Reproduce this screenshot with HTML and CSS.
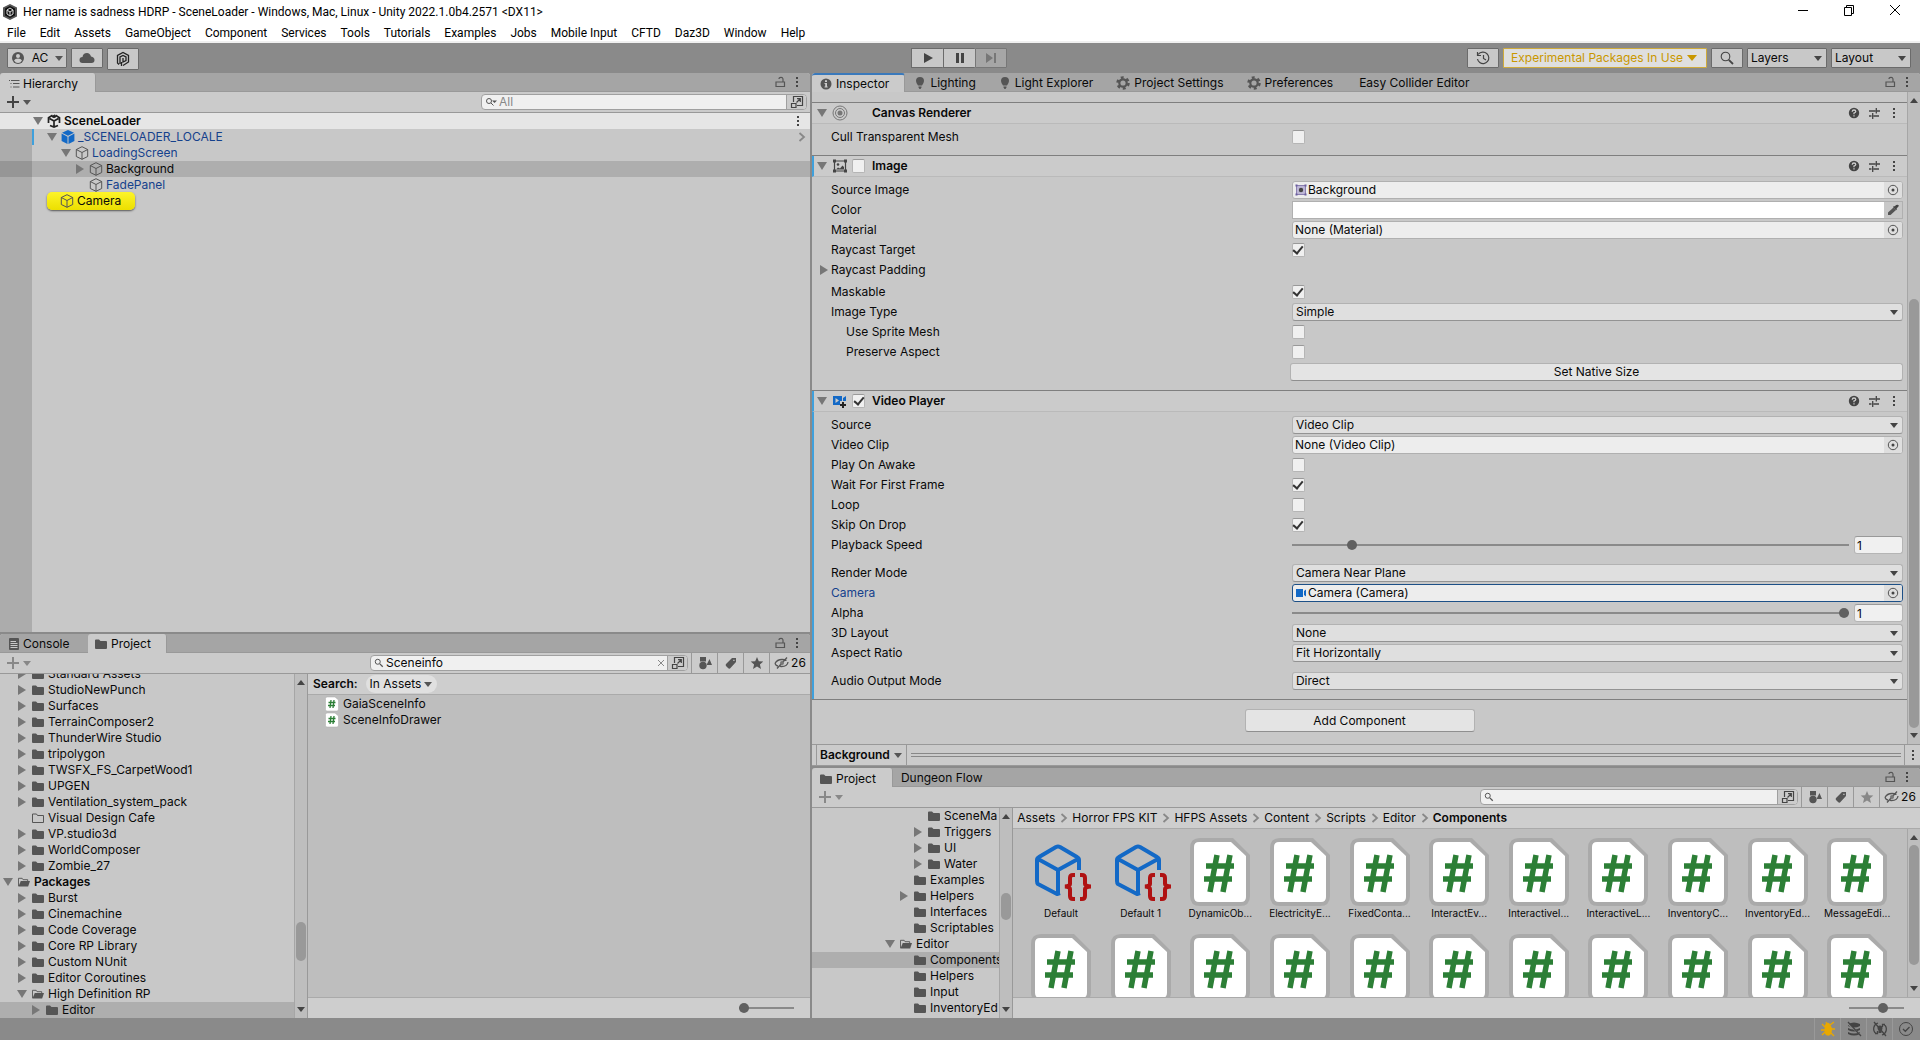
FILE: index.html
```html
<!DOCTYPE html>
<html lang="en">
<head>
<meta charset="utf-8">
<title>Her name is sadness HDRP - SceneLoader</title>
<link rel="stylesheet" href="styles.css">
</head>
<body>
<svg class="sprite" aria-hidden="true">
  <symbol id="folder" viewBox="0 0 12 12"><path fill="#555" d="M0 2.5Q0 1.5 1 1.5H4L5.500 3H11Q12 3 12 4V10Q12 11 11 11H1Q0 11 0 10Z"/></symbol>
  <symbol id="folder-empty" viewBox="0 0 12 12"><path fill="none" stroke="#555" d="M.5 2H4.500L5.500 3.500H11.500V10.500H.5Z"/></symbol>
  <symbol id="folder-open" viewBox="0 0 13 12"><path fill="none" stroke="#555" d="M.5 10.500V2H4.500L5.500 3.500H10.500V5"/><path fill="#555" d="M3 5H13L11 11H.5Z"/></symbol>
  <symbol id="cube" viewBox="0 0 14 14"><path fill="none" stroke="#555" d="M7 .7L12.700 3.500V10.500L7 13.300L1.300 10.500V3.500ZM1.300 3.500L7 6.500L12.700 3.500M7 6.500V13.300" stroke-linejoin="round"/></symbol>
  <symbol id="cube-blue" viewBox="0 0 14 14"><path fill="#1369c6" d="M7 0L13 2.700L7 5.800L1 2.700ZM.6 3.600L6.500 6.700V14L.6 11ZM13.400 3.600L7.500 6.700V14L13.400 11Z"/></symbol>
  <symbol id="unity" viewBox="0 0 14 14"><path fill="none" stroke="#222" stroke-width="1.700" d="M5.500 1.300L1.500 3.700V9M8.500 1.300L12.500 3.700V9M3 11.500L7 13L11 11.500M7 7V12.500M7 7L2.500 4.500M7 7L11.500 4.500M5 3L7 1.700V4M9 3L7 1.700"/></symbol>
  <symbol id="appicon" viewBox="0 0 16 16"><path fill="#555" d="M8 0L15 3.500V12.500L8 16L1 12.500V3.500Z"/><path fill="#111" d="M8 2L13 4.500V11.500L8 14L3 11.500V4.500Z"/><path fill="none" stroke="#ddd" d="M8 4L11 6V10L8 12L5 10V6ZM5 6L8 8L11 6M8 8V12"/></symbol>
  <symbol id="lock" viewBox="0 0 12 12"><path fill="none" stroke="#555" stroke-width="1.200" d="M2 6H10.500V10.500H2ZM9 6V3.500Q9 1.300 7 1.300T5 3"/></symbol>
  <symbol id="dots" viewBox="0 0 4 12"><path fill="#444" d="M1 1H3V3H1ZM1 5H3V7H1ZM1 9H3V11H1Z"/></symbol>
  <symbol id="list" viewBox="0 0 12 12"><path fill="none" stroke="#555" d="M3 2.500H11.500M5 5.500H11.500M5 9H11.500M1 2.500H2M2.500 5.500H3.500M2.500 9H3.500"/></symbol>
  <symbol id="console" viewBox="0 0 12 12"><rect x="1" width="10" height="12" rx="1" fill="#555"/><path stroke="#c8c8c8" d="M2.500 3.500H8M2.500 5.500H9.500M2.500 7.500H9.500M2.500 9.500H9.500"/></symbol>
  <symbol id="mag" viewBox="0 0 12 12"><circle cx="4.500" cy="4.500" r="3" fill="none" stroke="#555" stroke-width="1.200"/><path stroke="#555" stroke-width="1.500" d="M7 7L10.500 10.500"/></symbol>
  <symbol id="magmenu" viewBox="0 0 12 12"><circle cx="4" cy="5" r="2.500" fill="none" stroke="#555"/><path stroke="#555" d="M6 7L8.500 9.500"/><path fill="#555" d="M7 4.500H12L9.500 7Z"/></symbol>
  <symbol id="popout" viewBox="0 0 14 14"><path fill="none" stroke="#444" stroke-width="1.200" d="M3.500 7V1.500H12.500V10.500H7M1.500 8.500H6V12.500H1.500ZM6.500 7.500L10 4M7 3.700H10.300V7"/></symbol>
  <symbol id="shapes" viewBox="0 0 14 14"><path fill="#555" d="M2 1H8V5.500H2ZM9 8L11.500 3L14 9H9Z"/><circle cx="5" cy="9.500" r="3.700" fill="#555"/></symbol>
  <symbol id="tag" viewBox="0 0 14 14"><path fill="#555" fill-rule="evenodd" d="M2 8L8 2H12V6L6 12.500Q5 13 4 12L2 10Q1.300 9 2 8ZM9.300 3.800V5H10.500V3.800Z"/></symbol>
  <symbol id="star" viewBox="0 0 14 14"><path fill="currentColor" d="M7 1L8.800 5.200L13.300 5.500L9.900 8.400L11 13L7 10.500L3 13L4.100 8.400L.7 5.500L5.200 5.200Z"/></symbol>
  <symbol id="eyeoff" viewBox="0 0 16 14"><path fill="none" stroke="#555" stroke-width="1.300" d="M1 7.500Q3 3.500 8 3.500Q11 3.500 12.500 4.500M14 6Q13.500 10.500 7.500 10.500L6 10.300M3 12.500L13 1.500M1 7.500Q2 10 4 10"/><circle cx="8" cy="7" r="2" fill="#777"/></symbol>
  <symbol id="info" viewBox="0 0 12 12"><circle cx="6" cy="6" r="5.500" fill="#555"/><path fill="#ccc" d="M5 2.200H7V4H5ZM4.500 5H7V8.500H7.700V9.500H4.500V8.500H5.200V6H4.500Z"/></symbol>
  <symbol id="bulb" viewBox="0 0 12 12"><path fill="#555" d="M6 0Q10 .2 10 4Q9.800 6.500 8 8.500H4Q2.200 6.500 2 4Q2 .2 6 0ZM4.500 9.500H7.500V10.500L6.500 12H5.500L4.500 10.500Z"/></symbol>
  <symbol id="gear" viewBox="0 0 14 14"><circle cx="7" cy="7" r="3.700" fill="none" stroke="#555" stroke-width="2.200"/><circle cx="7" cy="7" r="5.500" fill="none" stroke="#555" stroke-width="2.500" stroke-dasharray="2.880 2.880"/></symbol>
  <symbol id="help" viewBox="0 0 12 12"><circle cx="6" cy="6" r="5.200" fill="#444"/><path fill="none" stroke="#ccc" stroke-width="1.300" d="M4.200 4.700Q4.300 3 6 3T7.800 4.500Q7.700 5.500 6 6V7.200M6 8.200V9.500"/></symbol>
  <symbol id="preset" viewBox="0 0 12 12"><path fill="none" stroke="#444" stroke-width="1.300" d="M1 4H7.500M9 4H12M8.300 1V6.500M1 9H3.500M5.500 9H11M4.700 6V12"/></symbol>
  <symbol id="canvasr" viewBox="0 0 16 16"><g fill="none" stroke="#777"><circle cx="8" cy="8" r="7"/><circle cx="8" cy="8" r="4.500"/></g><circle cx="8" cy="8" r="2.500" fill="#777"/></symbol>
  <symbol id="image" viewBox="0 0 16 16"><path fill="none" stroke="#444" stroke-width="1.200" d="M2.500 3H13.500V13H2.500Z"/><path fill="#444" d="M1 1.500H4V4.500H1ZM12 1.500H15V4.500H12ZM1 11.500H4V14.500H1ZM12 11.500H15V14.500H12ZM4 11.500L6 9.500L8 10.500L10.500 7.500L12 9V11.500Z"/><circle cx="6" cy="6.500" r="1.300" fill="#444"/></symbol>
  <symbol id="video" viewBox="0 0 16 16"><path fill="#1369c6" fill-rule="evenodd" d="M1 3H10V8H8V12H1ZM3.500 5V10L7 7.500ZM11 5L14 3V8H11Z"/><path fill="#222" d="M10 9H12V11H14V13H12V15H10V13H8V11H10Z"/></symbol>
  <symbol id="cam" viewBox="0 0 12 12"><path fill="#1369c6" d="M1 2H8V10H1ZM9 4L11 2.500V9.500L9 8Z"/></symbol>
  <symbol id="sprite-ic" viewBox="0 0 12 12"><path fill="#bdb6d6" stroke="#8a7fb0" d="M1.500 1.500H10.500V10.500H1.500Z"/><path fill="#6a5d9e" d="M.5 .5H2.500V2.500H.5ZM9.500 .5H11.500V2.500H9.500ZM.5 9.500H2.500V11.500H.5ZM9.500 9.500H11.500V11.500H9.500Z"/><circle cx="6" cy="6" r="2.200" fill="#444"/></symbol>
  <symbol id="target" viewBox="0 0 12 12"><circle cx="6" cy="6" r="4.700" fill="none" stroke="#555"/><circle cx="6" cy="6" r="1.500" fill="#444"/></symbol>
  <symbol id="dropper" viewBox="0 0 12 12"><path fill="#444" d="M8 2Q10 0 11.300 1T10 4L9.500 5L7 2.500Z"/><path fill="none" stroke="#444" stroke-width="1.300" d="M6.500 2.500L9.500 5.700"/><path fill="#555" d="M6.500 3.500L9 6L3.500 11H1V8.500Z"/></symbol>
  <symbol id="chev" viewBox="0 0 8 12"><path fill="none" stroke="#888" stroke-width="1.800" d="M1.500 2L6 6L1.500 10"/></symbol>
  <symbol id="script" viewBox="0 0 60 68"><path fill="#aaa" d="M10 0H43L60 17V58Q60 68 50 68H10Q0 68 0 58V10Q0 0 10 0Z"/><path fill="#fff" d="M9 4H41L56 18V59Q56 64 51 64H9Q4 64 4 59V9Q4 4 9 4Z"/><path fill="none" stroke="#2c7f36" stroke-width="5.500" d="M27 17L20 54M40 17L33 54M16 28H44M14 41H42"/></symbol>
  <symbol id="script-sm" viewBox="0 0 14 16"><path fill="#fff" stroke="#aaa" stroke-width=".5" d="M2 1H10L13.500 4V13Q13.500 15 12 15H2Q.5 15 .5 13.500V2.500Q.5 1 2 1Z"/><path fill="none" stroke="#2c7f36" stroke-width="1.300" d="M6 4L5 12M9 4L8 12M3.500 6.500H10.500M3 9.500H10"/></symbol>
  <symbol id="prefab" viewBox="-3 -1 60 60"><g fill="none" stroke="#1369c6" stroke-width="4" stroke-linejoin="round"><path d="M26 50L23 51L4 41Q3 40 3 38V17Q3 15 5 14L22 4Q24 3 26 4L43 14Q45 15 45 17V27M4 16L24 27L44 16M24 27V52"/></g><g fill="none" stroke="#b01212" stroke-width="4"><path d="M41 32H39Q36 32 36 35V41Q36 43 31 43.500Q36 44 36 46V53Q36 56 39 56H41M46 32H48Q51 32 51 35V41Q51 43 57 43.500Q51 44 51 46V53Q51 56 48 56H46"/></g></symbol>
  <symbol id="user" viewBox="0 0 14 14"><circle cx="7" cy="7" r="6" fill="#555"/><circle cx="7" cy="5" r="2" fill="#ccc"/><path fill="#ccc" d="M3 9.500Q4 7.500 7 7.500T11 9.500Q9.500 12 7 12T3 9.500Z"/></symbol>
  <symbol id="cloud" viewBox="0 0 16 12"><path fill="#555" d="M3.500 11Q.5 11 .5 8T3.500 5Q4 1 8 1Q11 1 12 4.500Q15.500 5 15.500 8T12.500 11Z"/></symbol>
  <symbol id="plastic" viewBox="0 0 16 16"><path fill="none" stroke="#222" stroke-width="1.300" d="M4 13.500L2.500 12V4.500L8 1.500L13.500 4.500V11L8 14.500M5 13V6L8 4.500L11 6V9.500L8 11V7M6.500 15V11"/></symbol>
  <symbol id="history" viewBox="0 0 14 14"><path fill="none" stroke="#444" stroke-width="1.200" d="M2 3.500Q4 1 7 1.200A5.700 5.700 0 1 1 1.500 8M1.500 1V4.500H5M7.500 4V7.500L10 9"/></symbol>
  <symbol id="find" viewBox="0 0 14 14"><circle cx="5.500" cy="5.500" r="4.300" fill="none" stroke="#444" stroke-width="1.100"/><path stroke="#444" stroke-width="1.800" d="M8.800 8.800L13 13"/></symbol>
  <symbol id="bug" viewBox="0 0 14 16"><path fill="#e9a800" d="M4 4Q5 1 8 2L10 5Q12 8 10 13Q8 16 5 14Q3 12 3.500 8Z"/><path stroke="#e9a800" stroke-width="1.300" d="M1 3L4 6M0 9H4M1 14L4 11M9 4L13 1M10 8H14M10 12L13 15M5 1L6 3"/></symbol>
  <symbol id="cache" viewBox="0 0 14 16"><path fill="#444" d="M1 3Q7 0 13 3V5Q7 8 1 5ZM1 7Q7 10 13 7V9Q7 12 1 9ZM1 11Q7 14 13 11V13Q7 16 1 13Z"/><path stroke="#8a8a8a" stroke-width="1.500" d="M1 3L14 14"/><path stroke="#444" stroke-width="1.200" d="M1 1L14 15"/></symbol>
  <symbol id="autolight" viewBox="0 0 16 16"><path fill="none" stroke="#444" stroke-width="1.300" d="M6 2A6 6 0 0 0 4 12.500M10 14A6 6 0 0 0 12 3.500M2 1L14 15M3 12.500H5.500V10M13 3.500H10.500V6"/><circle cx="8" cy="7" r="2.500" fill="#444"/><path fill="#444" d="M6.500 9H9.500V12H6.500Z"/></symbol>
  <symbol id="okcircle" viewBox="0 0 16 16"><circle cx="8" cy="8" r="6.500" fill="none" stroke="#444"/><path fill="none" stroke="#444" stroke-width="1.300" d="M5 8L7.300 10.300L11.500 6"/></symbol>
</svg>

<header>
  <div class="titlebar">
    <svg class="i16"><use href="#appicon"/></svg>
    <span class="title">Her name is sadness HDRP - SceneLoader - Windows, Mac, Linux - Unity 2022.1.0b4.2571 &lt;DX11&gt;</span>
    <div class="winctl">
      <button aria-label="Minimize"><svg class="i12" viewBox="0 0 12 12"><path stroke="#000" d="M1 6.500H11"/></svg></button>
      <button aria-label="Restore"><svg class="i12" viewBox="0 0 12 12"><path fill="none" stroke="#000" d="M1.500 3.500H8.500V11.500H1.500ZM3.500 3V1.500H10.500V9.500H9"/></svg></button>
      <button aria-label="Close"><svg class="i12" viewBox="0 0 12 12"><path stroke="#000" d="M1 1L11 11M11 1L1 11"/></svg></button>
    </div>
  </div>
  <nav class="menubar">
    <button>File</button><button>Edit</button><button>Assets</button><button>GameObject</button><button>Component</button><button>Services</button><button>Tools</button><button>Tutorials</button><button>Examples</button><button>Jobs</button><button>Mobile Input</button><button>CFTD</button><button>Daz3D</button><button>Window</button><button>Help</button>
  </nav>
</header>

<div class="apptools">
  <div class="side">
    <button class="tbtn acc"><svg class="i14"><use href="#user"/></svg>AC<i class="caret"></i></button>
    <button class="tbtn" aria-label="Cloud"><svg class="i16"><use href="#cloud"/></svg></button>
    <button class="tbtn tall" aria-label="Version control"><svg class="i16"><use href="#plastic"/></svg></button>
  </div>
  <div class="play">
    <button class="tbtn" aria-label="Play"><svg class="i12" viewBox="0 0 12 12"><path fill="#444" d="M2 1L11 6L2 11Z"/></svg></button>
    <button class="tbtn" aria-label="Pause"><svg class="i12" viewBox="0 0 12 12"><path fill="#444" d="M2 1H5V11H2ZM7 1H10V11H7Z"/></svg></button>
    <button class="tbtn off" aria-label="Step"><svg class="i12" viewBox="0 0 12 12"><path fill="#777" d="M1 1L8 6L1 11ZM9 1H11V11H9Z"/></svg></button>
  </div>
  <div class="side right">
    <button class="tbtn" aria-label="History"><svg class="i14"><use href="#history"/></svg></button>
    <button class="tbtn warn">Experimental Packages In Use<i class="caret"></i></button>
    <button class="tbtn" aria-label="Search"><svg class="i14"><use href="#find"/></svg></button>
    <span class="sel top"><select aria-label="Layers"><option>Layers</option></select></span>
    <span class="sel top"><select aria-label="Layout"><option>Layout</option></select></span>
  </div>
</div>

<main>
  <div class="col">
    <section class="pane hierarchy">
      <div class="tabs"><button class="tab on hier"><svg class="i12"><use href="#list"/></svg>Hierarchy</button><span class="tabctl"><svg class="i12"><use href="#lock"/></svg><svg class="dots"><use href="#dots"/></svg></span></div>
      <div class="bar">
        <button class="add" aria-label="Create"><svg class="i12" viewBox="0 0 12 12"><path stroke="#444" stroke-width="2" d="M6 0V12M0 6H12"/></svg><i class="caret"></i></button>
        <div class="search hs"><svg class="i12"><use href="#magmenu"/></svg><input type="text" placeholder="All" aria-label="Search hierarchy"><button aria-label="Open search"><svg class="i14"><use href="#popout"/></svg></button></div>
      </div>
      <ul class="tree htree">
        <li class="scene d0"><b class="arr dn"></b><svg class="ic"><use href="#unity"/></svg><strong>SceneLoader</strong><svg class="dots end"><use href="#dots"/></svg></li>
        <li class="d1 blue mark"><b class="arr dn"></b><svg class="ic"><use href="#cube-blue"/></svg>_SCENELOADER_LOCALE<svg class="chev end"><use href="#chev"/></svg></li>
        <li class="d2 blue"><b class="arr dn"></b><svg class="ic"><use href="#cube"/></svg>LoadingScreen</li>
        <li class="d3 sel-row"><b class="arr rt"></b><svg class="ic"><use href="#cube"/></svg>Background</li>
        <li class="d3 blue"><b class="arr"></b><svg class="ic"><use href="#cube"/></svg>FadePanel</li>
        <li class="ping-row"><span class="ping"><svg class="ic"><use href="#cube"/></svg>Camera</span></li>
      </ul>
    </section>

    <section class="pane project-l">
      <div class="tabs"><button class="tab con"><svg class="i12"><use href="#console"/></svg>Console</button><button class="tab on"><svg class="i12"><use href="#folder"/></svg>Project</button><span class="tabctl"><svg class="i12"><use href="#lock"/></svg><svg class="dots"><use href="#dots"/></svg></span></div>
      <div class="bar">
        <button class="add dim" aria-label="Create"><svg class="i12" viewBox="0 0 12 12"><path stroke="#888" stroke-width="2" d="M6 0V12M0 6H12"/></svg><i class="caret"></i></button>
        <div class="search"><svg class="i10"><use href="#mag"/></svg><input type="text" value="Sceneinfo" aria-label="Search project"><span class="clear"><svg class="i8" viewBox="0 0 8 8"><path stroke="#888" d="M1 1L7 7M7 1L1 7"/></svg></span><button aria-label="Open search"><svg class="i14"><use href="#popout"/></svg></button></div>
        <button class="fbtn" aria-label="Type"><svg class="i14"><use href="#shapes"/></svg></button><button class="fbtn" aria-label="Label"><svg class="i14"><use href="#tag"/></svg></button><button class="fbtn" aria-label="Save search"><svg class="i14"><use href="#star"/></svg></button><button class="fbtn hid"><svg class="i16"><use href="#eyeoff"/></svg>26</button>
      </div>
      <div class="split">
        <ul class="tree ptree">
          <li class="d1"><b class="arr rt"></b><svg class="ic"><use href="#folder"/></svg>Standard Assets</li>
          <li class="d1"><b class="arr rt"></b><svg class="ic"><use href="#folder"/></svg>StudioNewPunch</li>
          <li class="d1"><b class="arr rt"></b><svg class="ic"><use href="#folder"/></svg>Surfaces</li>
          <li class="d1"><b class="arr rt"></b><svg class="ic"><use href="#folder"/></svg>TerrainComposer2</li>
          <li class="d1"><b class="arr rt"></b><svg class="ic"><use href="#folder"/></svg>ThunderWire Studio</li>
          <li class="d1"><b class="arr rt"></b><svg class="ic"><use href="#folder"/></svg>tripolygon</li>
          <li class="d1"><b class="arr rt"></b><svg class="ic"><use href="#folder"/></svg>TWSFX_FS_CarpetWood1</li>
          <li class="d1"><b class="arr rt"></b><svg class="ic"><use href="#folder"/></svg>UPGEN</li>
          <li class="d1"><b class="arr rt"></b><svg class="ic"><use href="#folder"/></svg>Ventilation_system_pack</li>
          <li class="d1"><b class="arr"></b><svg class="ic"><use href="#folder-empty"/></svg>Visual Design Cafe</li>
          <li class="d1"><b class="arr rt"></b><svg class="ic"><use href="#folder"/></svg>VP.studio3d</li>
          <li class="d1"><b class="arr rt"></b><svg class="ic"><use href="#folder"/></svg>WorldComposer</li>
          <li class="d1"><b class="arr rt"></b><svg class="ic"><use href="#folder"/></svg>Zombie_27</li>
          <li class="d0"><b class="arr dn"></b><svg class="ic"><use href="#folder-open"/></svg><strong>Packages</strong></li>
          <li class="d1"><b class="arr rt"></b><svg class="ic"><use href="#folder"/></svg>Burst</li>
          <li class="d1"><b class="arr rt"></b><svg class="ic"><use href="#folder"/></svg>Cinemachine</li>
          <li class="d1"><b class="arr rt"></b><svg class="ic"><use href="#folder"/></svg>Code Coverage</li>
          <li class="d1"><b class="arr rt"></b><svg class="ic"><use href="#folder"/></svg>Core RP Library</li>
          <li class="d1"><b class="arr rt"></b><svg class="ic"><use href="#folder"/></svg>Custom NUnit</li>
          <li class="d1"><b class="arr rt"></b><svg class="ic"><use href="#folder"/></svg>Editor Coroutines</li>
          <li class="d1"><b class="arr dn"></b><svg class="ic"><use href="#folder-open"/></svg>High Definition RP</li>
          <li class="d2 sel-row"><b class="arr rt"></b><svg class="ic"><use href="#folder"/></svg>Editor</li>
        </ul>
        <div class="sbar"><i class="up"></i><div class="track"><span class="before-l"></span><span class="thumb thumb-l"></span></div><i class="down"></i></div>
        <div class="results">
          <div class="crumbs search-in"><strong>Search:</strong><button class="pill">In Assets<i class="caret"></i></button></div>
          <ul class="files">
            <li><svg><use href="#script-sm"/></svg>GaiaSceneInfo</li>
            <li><svg><use href="#script-sm"/></svg>SceneInfoDrawer</li>
          </ul>
          <div class="foot"><input class="zoomer" type="range" min="0" max="100" value="0" aria-label="Icon size"></div>
        </div>
      </div>
    </section>
  </div>

  <div class="col">
    <section class="pane inspector">
      <div class="tabs"><button class="tab on focus"><svg class="i12"><use href="#info"/></svg>Inspector</button><button class="tab"><svg class="i12"><use href="#bulb"/></svg>Lighting</button><button class="tab"><svg class="i12"><use href="#bulb"/></svg>Light Explorer</button><button class="tab"><svg class="i14"><use href="#gear"/></svg>Project Settings</button><button class="tab"><svg class="i14"><use href="#gear"/></svg>Preferences</button><button class="tab plain">Easy Collider Editor</button><span class="tabctl"><svg class="i12"><use href="#lock"/></svg><svg class="dots"><use href="#dots"/></svg></span></div>
      <div class="split">
        <div class="props">
          <article class="comp">
            <h2><b class="arr dn"></b><svg class="i16"><use href="#canvasr"/></svg><span class="nochk"></span><span class="name">Canvas Renderer</span><span class="hctl"><svg class="i12"><use href="#help"/></svg><svg class="i12"><use href="#preset"/></svg><svg class="dots"><use href="#dots"/></svg></span></h2>
            <div class="rows"><div class="row"><label for="cull">Cull Transparent Mesh</label><input type="checkbox" id="cull"></div></div>
          </article>
          <article class="comp">
            <h2 class="mod"><b class="arr dn"></b><svg class="i16"><use href="#image"/></svg><input type="checkbox" aria-label="Image enabled"><span class="name">Image</span><span class="hctl"><svg class="i12"><use href="#help"/></svg><svg class="i12"><use href="#preset"/></svg><svg class="dots"><use href="#dots"/></svg></span></h2>
            <div class="rows">
              <div class="row"><label for="src">Source Image</label><div class="obj"><svg class="i12"><use href="#sprite-ic"/></svg><input id="src" type="text" value="Background"><button aria-label="Pick"><svg class="i12"><use href="#target"/></svg></button></div></div>
              <div class="row"><label for="colr">Color</label><div class="obj white"><input id="colr" type="text" value=""><button aria-label="Pick color"><svg class="i12"><use href="#dropper"/></svg></button></div></div>
              <div class="row"><label for="mat">Material</label><div class="obj"><input id="mat" type="text" value="None (Material)"><button aria-label="Pick"><svg class="i12"><use href="#target"/></svg></button></div></div>
              <div class="row"><label for="rt">Raycast Target</label><input type="checkbox" id="rt" checked></div>
              <div class="row fold"><b class="arr rt"></b><span>Raycast Padding</span></div>
              <div class="row gap2"><label for="mk">Maskable</label><input type="checkbox" id="mk" checked></div>
              <div class="row"><label for="it">Image Type</label><span class="sel"><select id="it"><option>Simple</option></select></span></div>
              <div class="row sub"><label for="usm">Use Sprite Mesh</label><input type="checkbox" id="usm"></div>
              <div class="row sub"><label for="pa">Preserve Aspect</label><input type="checkbox" id="pa"></div>
              <div class="row"><span></span><button class="btn native">Set Native Size</button></div>
            </div>
          </article>
          <article class="comp all">
            <h2 class="mod"><b class="arr dn"></b><svg class="i16"><use href="#video"/></svg><input type="checkbox" aria-label="Video Player enabled" checked><span class="name">Video Player</span><span class="hctl"><svg class="i12"><use href="#help"/></svg><svg class="i12"><use href="#preset"/></svg><svg class="dots"><use href="#dots"/></svg></span></h2>
            <div class="rows">
              <div class="row"><label for="vs">Source</label><span class="sel"><select id="vs"><option>Video Clip</option></select></span></div>
              <div class="row"><label for="vc">Video Clip</label><div class="obj"><input id="vc" type="text" value="None (Video Clip)"><button aria-label="Pick"><svg class="i12"><use href="#target"/></svg></button></div></div>
              <div class="row"><label for="poa">Play On Awake</label><input type="checkbox" id="poa"></div>
              <div class="row"><label for="wff">Wait For First Frame</label><input type="checkbox" id="wff" checked></div>
              <div class="row"><label for="lp">Loop</label><input type="checkbox" id="lp"></div>
              <div class="row"><label for="sod">Skip On Drop</label><input type="checkbox" id="sod" checked></div>
              <div class="row"><label for="ps">Playback Speed</label><div class="slide"><input id="ps" type="range" min="0" max="10" value="1"><input type="text" value="1" aria-label="Playback speed value"></div></div>
              <div class="row gap8"><label for="rm">Render Mode</label><span class="sel"><select id="rm"><option>Camera Near Plane</option></select></span></div>
              <div class="row"><label for="cm" class="blue">Camera</label><div class="obj focus"><svg class="i12"><use href="#cam"/></svg><input id="cm" type="text" value="Camera (Camera)"><button aria-label="Pick"><svg class="i12"><use href="#target"/></svg></button></div></div>
              <div class="row"><label for="al">Alpha</label><div class="slide"><input id="al" type="range" min="0" max="1" value="1"><input type="text" value="1" aria-label="Alpha value"></div></div>
              <div class="row"><label for="l3">3D Layout</label><span class="sel"><select id="l3"><option>None</option></select></span></div>
              <div class="row"><label for="ar">Aspect Ratio</label><span class="sel"><select id="ar"><option>Fit Horizontally</option></select></span></div>
              <div class="row gap8"><label for="ao">Audio Output Mode</label><span class="sel"><select id="ao"><option>Direct</option></select></span></div>
            </div>
          </article>
          <div class="addc"><button class="btn">Add Component</button></div>
        </div>
        <div class="sbar"><i class="up"></i><div class="track"><span class="before-i"></span><span class="thumb thumb-i"></span></div><i class="down"></i></div>
      </div>
      <div class="preview"><button>Background<i class="caret"></i></button><span class="grip"></span><span class="pdots"><svg class="dots"><use href="#dots"/></svg></span></div>
    </section>

    <section class="pane project-r">
      <div class="tabs"><button class="tab on"><svg class="i12"><use href="#folder"/></svg>Project</button><button class="tab dungeon">Dungeon Flow</button><span class="tabctl"><svg class="i12"><use href="#lock"/></svg><svg class="dots"><use href="#dots"/></svg></span></div>
      <div class="bar">
        <button class="add dim" aria-label="Create"><svg class="i12" viewBox="0 0 12 12"><path stroke="#888" stroke-width="2" d="M6 0V12M0 6H12"/></svg><i class="caret"></i></button>
        <div class="search"><svg class="i10"><use href="#mag"/></svg><input type="text" aria-label="Search project"><button aria-label="Open search"><svg class="i14"><use href="#popout"/></svg></button></div>
        <button class="fbtn" aria-label="Type"><svg class="i14"><use href="#shapes"/></svg></button><button class="fbtn" aria-label="Label"><svg class="i14"><use href="#tag"/></svg></button><button class="fbtn faded" aria-label="Save search"><svg class="i14"><use href="#star"/></svg></button><button class="fbtn hid"><svg class="i16"><use href="#eyeoff"/></svg>26</button>
      </div>
      <div class="split">
        <ul class="tree rtree">
          <li class="d7"><b class="arr"></b><svg class="ic"><use href="#folder"/></svg>SceneMa</li>
          <li class="d7"><b class="arr rt"></b><svg class="ic"><use href="#folder"/></svg>Triggers</li>
          <li class="d7"><b class="arr rt"></b><svg class="ic"><use href="#folder"/></svg>UI</li>
          <li class="d7"><b class="arr rt"></b><svg class="ic"><use href="#folder"/></svg>Water</li>
          <li class="d6"><b class="arr"></b><svg class="ic"><use href="#folder"/></svg>Examples</li>
          <li class="d6"><b class="arr rt"></b><svg class="ic"><use href="#folder"/></svg>Helpers</li>
          <li class="d6"><b class="arr"></b><svg class="ic"><use href="#folder"/></svg>Interfaces</li>
          <li class="d6"><b class="arr"></b><svg class="ic"><use href="#folder"/></svg>Scriptables</li>
          <li class="d5"><b class="arr dn"></b><svg class="ic"><use href="#folder-open"/></svg>Editor</li>
          <li class="d6 sel-row"><b class="arr"></b><svg class="ic"><use href="#folder"/></svg>Components</li>
          <li class="d6"><b class="arr"></b><svg class="ic"><use href="#folder"/></svg>Helpers</li>
          <li class="d6"><b class="arr"></b><svg class="ic"><use href="#folder"/></svg>Input</li>
          <li class="d6"><b class="arr"></b><svg class="ic"><use href="#folder"/></svg>InventoryEd</li>
        </ul>
        <div class="sbar"><i class="up"></i><div class="track"><span class="before-r"></span><span class="thumb thumb-r"></span></div><i class="down"></i></div>
        <div class="results">
          <nav class="crumbs"><a href="#">Assets</a><svg class="chev"><use href="#chev"/></svg><a href="#">Horror FPS KIT</a><svg class="chev"><use href="#chev"/></svg><a href="#">HFPS Assets</a><svg class="chev"><use href="#chev"/></svg><a href="#">Content</a><svg class="chev"><use href="#chev"/></svg><a href="#">Scripts</a><svg class="chev"><use href="#chev"/></svg><a href="#">Editor</a><svg class="chev"><use href="#chev"/></svg><strong>Components</strong></nav>
          <div class="split">
            <ul class="grid">
              <li><svg><use href="#prefab"/></svg>Default</li>
              <li><svg><use href="#prefab"/></svg>Default 1</li>
              <li><svg><use href="#script"/></svg>DynamicOb...</li>
              <li><svg><use href="#script"/></svg>ElectricityE...</li>
              <li><svg><use href="#script"/></svg>FixedConta...</li>
              <li><svg><use href="#script"/></svg>InteractEv...</li>
              <li><svg><use href="#script"/></svg>InteractiveI...</li>
              <li><svg><use href="#script"/></svg>InteractiveL...</li>
              <li><svg><use href="#script"/></svg>InventoryC...</li>
              <li><svg><use href="#script"/></svg>InventoryEd...</li>
              <li><svg><use href="#script"/></svg>MessageEdi...</li>
              <li><svg><use href="#script"/></svg></li><li><svg><use href="#script"/></svg></li><li><svg><use href="#script"/></svg></li><li><svg><use href="#script"/></svg></li><li><svg><use href="#script"/></svg></li><li><svg><use href="#script"/></svg></li><li><svg><use href="#script"/></svg></li><li><svg><use href="#script"/></svg></li><li><svg><use href="#script"/></svg></li><li><svg><use href="#script"/></svg></li><li><svg><use href="#script"/></svg></li>
            </ul>
            <div class="sbar"><i class="up"></i><div class="track"><span class="thumb thumb-g"></span></div><i class="down"></i></div>
          </div>
          <div class="foot"><input class="zoomer" type="range" min="0" max="100" value="64" aria-label="Icon size"></div>
        </div>
      </div>
    </section>
  </div>
</main>

<footer class="status"><button aria-label="Debugger"><svg class="i16"><use href="#bug"/></svg></button><button aria-label="Cache server"><svg class="i16"><use href="#cache"/></svg></button><button aria-label="Auto lighting"><svg class="i16"><use href="#autolight"/></svg></button><button aria-label="Background tasks"><svg class="i16"><use href="#okcircle"/></svg></button></footer>
</body>
</html>
```
FILE: styles.css
```css
* { box-sizing: border-box; }
html, body { height: 100%; margin: 0; }
body {
  display: flex; flex-direction: column; overflow: hidden;
  background: #8a8a8a; color: #090909;
  font: 12px/16px Inter, "Liberation Sans", sans-serif;
}
button, input, select { font: inherit; color: inherit; margin: 0; }
button { padding: 0; border: 0; background: none; }
input[type="text"] { border: 0; padding: 0; background: none; min-width: 0; outline: 0; }
ul { list-style: none; margin: 0; padding: 0; }
svg { flex: none; display: block; }
a { color: inherit; text-decoration: none; }
.sprite { display: none; }
strong { font-weight: 600; }
.blue { color: #15418c; }

.i8 { width: 8px; height: 8px; }
.i10 { width: 10px; height: 10px; }
.i12 { width: 12px; height: 12px; }
.i14 { width: 14px; height: 14px; }
.i16 { width: 16px; height: 16px; }
.dots { width: 4px; height: 12px; }
.chev { width: 8px; height: 12px; }
.caret { width: 0; height: 0; border: 4px solid transparent; border-top: 5px solid #555; border-bottom: 0; }

/* window frame */
header { flex: none; background: #fff; color: #000; border-bottom: 2px solid #f0f0f0; font-family: Roboto, "Noto Sans", sans-serif; }
.titlebar { display: flex; align-items: center; height: 24px; padding-left: 2px; }
.title { flex: 1; padding-left: 5px; }
.winctl { display: flex; align-self: flex-start; height: 20px; padding-right: 2px; }
.winctl button { width: 46px; display: grid; place-items: center; }
.menubar { display: flex; gap: 14px; height: 17px; padding-left: 7px; }

.apptools { flex: none; display: flex; justify-content: space-between; height: 30px; padding: 5px 9px 0 7px; }
.side { flex: 1; display: flex; gap: 4px; align-items: flex-start; }
.right { justify-content: flex-end; }
.play { display: flex; }
.tbtn { display: flex; align-items: center; justify-content: center; width: 32px; height: 20px; background: #c8c8c8; border: 1px solid #6b6b6b; border-radius: 1px; }
.play .tbtn { border-right-width: 0; }
.play .off { background: #a6a6a6; border: 1px solid #777; }
.acc { width: 60px; gap: 7px; }
.tall { height: 22px; }
.warn { width: auto; gap: 4px; padding: 0 9px 0 7px; background: #dfdfdf; border-color: #cfab3c; color: #c99700; }
.warn .caret { border-width: 6px 5px 0; border-top-color: #c99700; }

.sel { display: grid; align-items: center; height: 18px; min-width: 0; }
.sel select { grid-area: 1 / 1; width: 100%; height: 18px; appearance: none; background: #dfdfdf; border: 1px solid #b2b2b2; border-bottom-color: #939393; border-radius: 3px; padding: 0 18px 0 3px; line-height: 14px; outline: 0; }
.sel::after { content: ""; grid-area: 1 / 1; justify-self: end; margin-right: 5px; border: 4px solid transparent; border-top: 5px solid #444; border-bottom: 0; pointer-events: none; }
.sel.top { width: 80px; height: 20px; }
.sel.top select { height: 20px; background: #c8c8c8; border-color: #6b6b6b; border-radius: 1px; }

main { flex: 1; min-height: 0; display: grid; grid-template-columns: 810fr 1108fr; gap: 2px; }
.col { display: flex; flex-direction: column; gap: 2px; min-width: 0; min-height: 0; }
.pane { display: flex; flex-direction: column; min-height: 0; overflow: hidden; background: #c8c8c8; border-radius: 3px 3px 0 0; }
.hierarchy { flex: 559 1 0; }
.project-l { flex: 384 1 0; }
.inspector { flex: 693 1 0; }
.project-r { flex: 250 1 0; }

.tabs { flex: none; display: flex; height: 19px; background: #a5a5a5; border-bottom: 1px solid #999; }
.tab { display: flex; align-items: center; gap: 4px; padding: 2px 12px 0 8px; }
.tab + .tab { padding-left: 9px; padding-right: 14px; }
.tab.on { background: #cbcbcb; border-right: 1px solid #999; border-radius: 3px 3px 0 0; margin-bottom: -1px; }
.project-l .tab.on { padding: 1px 15px 0 7px; }
.tab.con { width: 88px; gap: 3px; }
.tab.hier { gap: 3px; padding-right: 17px; }
.project-r .tab.on { padding-right: 16px; }
.tab.dungeon { padding-left: 8px; }
.tab.focus { padding-top: 0; padding-right: 15px; border-top: 2px solid #3a79bb; }
.tab.plain { padding-left: 12px; }
.tabctl { margin-left: auto; display: flex; align-items: center; gap: 9px; padding-right: 11px; }

.bar { flex: none; display: flex; align-items: stretch; height: 21px; background: #cbcbcb; border-bottom: 1px solid #999; }
.add { display: flex; align-items: center; gap: 4px; padding-left: 7px; margin-right: auto; }
.dim .caret { border-top-color: #888; }
.search { display: flex; align-items: center; align-self: center; height: 16px; width: 318px; margin-right: 3px; padding-left: 3px; gap: 2px; background: #f0f0f0; border: 1px solid #a0a0a0; border-radius: 4px; overflow: hidden; }
.search input { flex: 1; line-height: 14px; height: 14px; }
.search input::placeholder { color: #888; opacity: 1; }
.search button { display: grid; place-items: center; width: 20px; height: 14px; background: #cbcbcb; border-left: 1px solid #a0a0a0; }
.hs { width: 326px; }
.fbtn { display: flex; align-items: center; justify-content: center; width: 26px; border-left: 1px solid #999; color: #555; }
.faded { color: #888; }
.hid { width: 41px; color: #090909; gap: 1px; }

/* trees */
.tree { overflow: hidden; }
.tree li { display: flex; align-items: center; height: 16px; padding-left: calc(var(--base, 0px) + var(--d) * 14px); white-space: nowrap; }
.d0 { --d: 0; } .d1 { --d: 1; } .d2 { --d: 2; } .d3 { --d: 3; }
.d5 { --d: 5; } .d6 { --d: 6; } .d7 { --d: 7; }
.arr { flex: none; width: 16px; height: 10px; display: grid; place-items: center; }
.dn::before { content: ""; border: 5px solid transparent; border-top: 8px solid #777; border-bottom: 0; }
.rt::before { content: ""; border: 5px solid transparent; border-left: 8px solid #777; border-right: 0; }
.ic { width: 12px; height: 12px; margin: 0 4px 0 2px; }
.sel-row { background: #aeaeae; }
.htree { --base: 30px; flex: 1; background: linear-gradient(to right, #acacac 32px, #c8c8c8 32px); }
.htree .ic { width: 14px; height: 14px; margin: 0 3px 0 1px; }
.htree .scene { background: #e6e6e6; }
.htree .sel-row { background: linear-gradient(to right, #969696 32px, #aeaeae 32px); }
.htree .mark { background: linear-gradient(to right, transparent 32px, #3fa0dc 32px, #3fa0dc 34px, transparent 34px); }
.end { margin-left: auto; margin-right: 10px; }
.chev.end { margin-right: 4px; }
.htree .ping-row { padding-left: 47px; overflow: visible; }
.ping { display: flex; align-items: center; height: 18px; padding: 0 14px 0 12px; background: linear-gradient(#fdf42a, #ecdf00); border-radius: 5px; box-shadow: 0 1px 2px #555; }

.split { flex: 1; min-height: 0; display: flex; }
.ptree, .rtree { flex: none; display: flex; flex-direction: column; }
.ptree { width: 36.300%; justify-content: flex-end; }
.rtree { width: 16.900%; }
.tree li { flex: none; }
.ptree, .rtree { background: #c8c8c8; }

.sbar { flex: none; width: 13px; display: flex; flex-direction: column; align-items: center; padding: 6px 0; background: #bebebe; border-left: 1px solid #a6a6a6; }
.sbar .up { border: 4px solid transparent; border-bottom: 5px solid #444; border-top: 0; }
.sbar .down { border: 4px solid transparent; border-top: 5px solid #444; border-bottom: 0; }
.track { flex: 1; display: flex; flex-direction: column; align-items: center; padding: 5px 0; }
.thumb { width: 10px; border-radius: 5px; background: #999; }
.before-l { flex: 234 1 0; } .thumb-l { flex: 39 1 0; margin-bottom: 41px; }
.before-i { flex: 195 1 0; } .thumb-i { flex: 437 1 0; }
.before-r { flex: 66 1 0; } .thumb-r { flex: 26 1 0; margin-bottom: 82px; }
.thumb-g { flex: 1; margin-bottom: 16px; }

.results { flex: 1; min-width: 0; display: flex; flex-direction: column; background: #bebebe; border-left: 1px solid #999; }
.crumbs { flex: none; display: flex; align-items: center; gap: 4px; height: 21px; padding-left: 4px; background: #cecece; border-bottom: 1px solid #aaa; }
.crumbs .chev { margin-left: 1px; }
.search-in { padding-left: 5px; gap: 8px; }
.pill { display: flex; align-items: center; gap: 3px; height: 18px; padding: 0 5px 0 4px; background: #e0e0e0; border-radius: 9px; }
.files { flex: 1; padding-top: 1px; }
.files li { display: flex; align-items: center; gap: 4px; height: 16px; padding-left: 17px; }
.files svg { width: 14px; height: 16px; }
.foot { flex: none; display: flex; align-items: center; justify-content: flex-end; height: 21px; padding-right: 16px; background: #cecece; border-top: 1px solid #aaa; }

input[type="range"] { appearance: none; background: linear-gradient(#8a8a8a, #8a8a8a) center / 100% 2px no-repeat; height: 18px; margin: 0; min-width: 0; }
input[type="range"]::-webkit-slider-thumb { appearance: none; width: 10px; height: 10px; border-radius: 5px; background: #606060; }
.zoomer { width: 55px; }

.grid { flex: 1; min-width: 0; display: grid; grid-template-columns: repeat(11, 1fr); grid-auto-rows: 96px; align-content: start; padding: 9px 10px 0 8px; overflow: hidden; font-size: 10px; line-height: 14px; }
.grid li { display: flex; flex-direction: column; align-items: center; white-space: nowrap; }
.grid svg { width: 60px; height: 68px; }

/* inspector */
.props { flex: 1; min-width: 0; overflow: hidden; padding-top: 10px; }
.comp { border-top: 1px solid #7f7f7f; }
.comp h2 { display: flex; align-items: center; height: 21px; margin: 0; padding-left: 2px; background: #cbcbcb; border-bottom: 1px solid #bababa; font-size: 12px; line-height: 16px; font-weight: 600; }
.comp h2 .i16 { margin: 0 4px 0 2px; }
.comp h2.mod { border-left: 2px solid #3fa0dc; padding-left: 0; }
.comp.all .rows { border-left: 2px solid #3fa0dc; padding-left: 17px; }
.nochk { width: 13px; }
.name { padding-left: 7px; }
.hctl { margin-left: auto; display: flex; gap: 8px; padding-right: 11px; align-items: center; }
.hctl .dots { margin-left: 4px; }
.rows { display: flex; flex-direction: column; gap: 2px; padding: 4px 4px 9px 19px; }
.row { display: grid; grid-template-columns: 43% 1fr; align-items: center; height: 18px; }
.row.sub label { padding-left: 15px; }
.row.fold { display: flex; margin-left: -15px; }
.fold .arr { width: 15px; justify-content: start; padding-left: 4px; }
.gap2 { margin-top: 2px; }
.gap8 { margin-top: 8px; }

input[type="checkbox"] { appearance: none; flex: none; width: 13px; height: 14px; background: #f0f0f0; border: 1px solid #b5b5b5; border-top-color: #999; border-radius: 2px; display: grid; place-items: center; }
input[type="checkbox"]:checked::after { content: ""; width: 4px; height: 8px; border: solid #333; border-width: 0 2px 2px 0; transform: rotate(40deg); margin-top: -2px; }

.obj { display: flex; align-items: center; height: 18px; background: #ededed; border: 1px solid #b0b0b0; border-radius: 3px; overflow: hidden; padding-left: 2px; }
.obj input { flex: 1; height: 16px; }
.obj .i12 + input { padding-left: 1px; }
.obj button { display: grid; place-items: center; width: 18px; height: 16px; background: #dedede; }
.obj.focus { border-color: #1d5087; }
.obj.white { background: #fff; border-radius: 0; }
.obj.white button { background: #c8c8c8; }
.slide { display: flex; align-items: center; gap: 5px; }
.slide input[type="range"] { flex: 1; }
.slide input[type="text"] { flex: none; width: 49px; height: 18px; padding-left: 2px; background: #f0f0f0; border: 1px solid #b5b5b5; border-top-color: #999; border-radius: 3px; }
.btn { height: 18px; background: #e4e4e4; border: 1px solid #b2b2b2; border-bottom-color: #8f8f8f; border-radius: 3px; line-height: 14px; }
.native { margin-left: -2px; }
.addc { display: flex; justify-content: center; border-top: 1px solid #7f7f7f; padding-top: 9px; }
.addc .btn { width: 230px; height: 23px; }

.preview { flex: none; display: flex; align-items: center; height: 22px; background: #cbcbcb; border: solid #999; border-width: 1px 0; padding-left: 4px; }
.preview button { display: flex; align-items: center; gap: 4px; height: 20px; padding: 0 4px 0 3px; border: solid #999; border-width: 0 1px; font-weight: 600; }
.grip { flex: 1; height: 4px; margin: 0 3px 0 4px; border: solid #888; border-width: 1px 0; }
.pdots { width: 16px; height: 20px; display: grid; place-items: center; border-left: 1px solid #999; }

.status { flex: none; display: flex; justify-content: flex-end; height: 22px; padding-right: 2px; }
.status button { width: 26px; display: grid; place-items: center; border-left: 1px solid #999; }
```
